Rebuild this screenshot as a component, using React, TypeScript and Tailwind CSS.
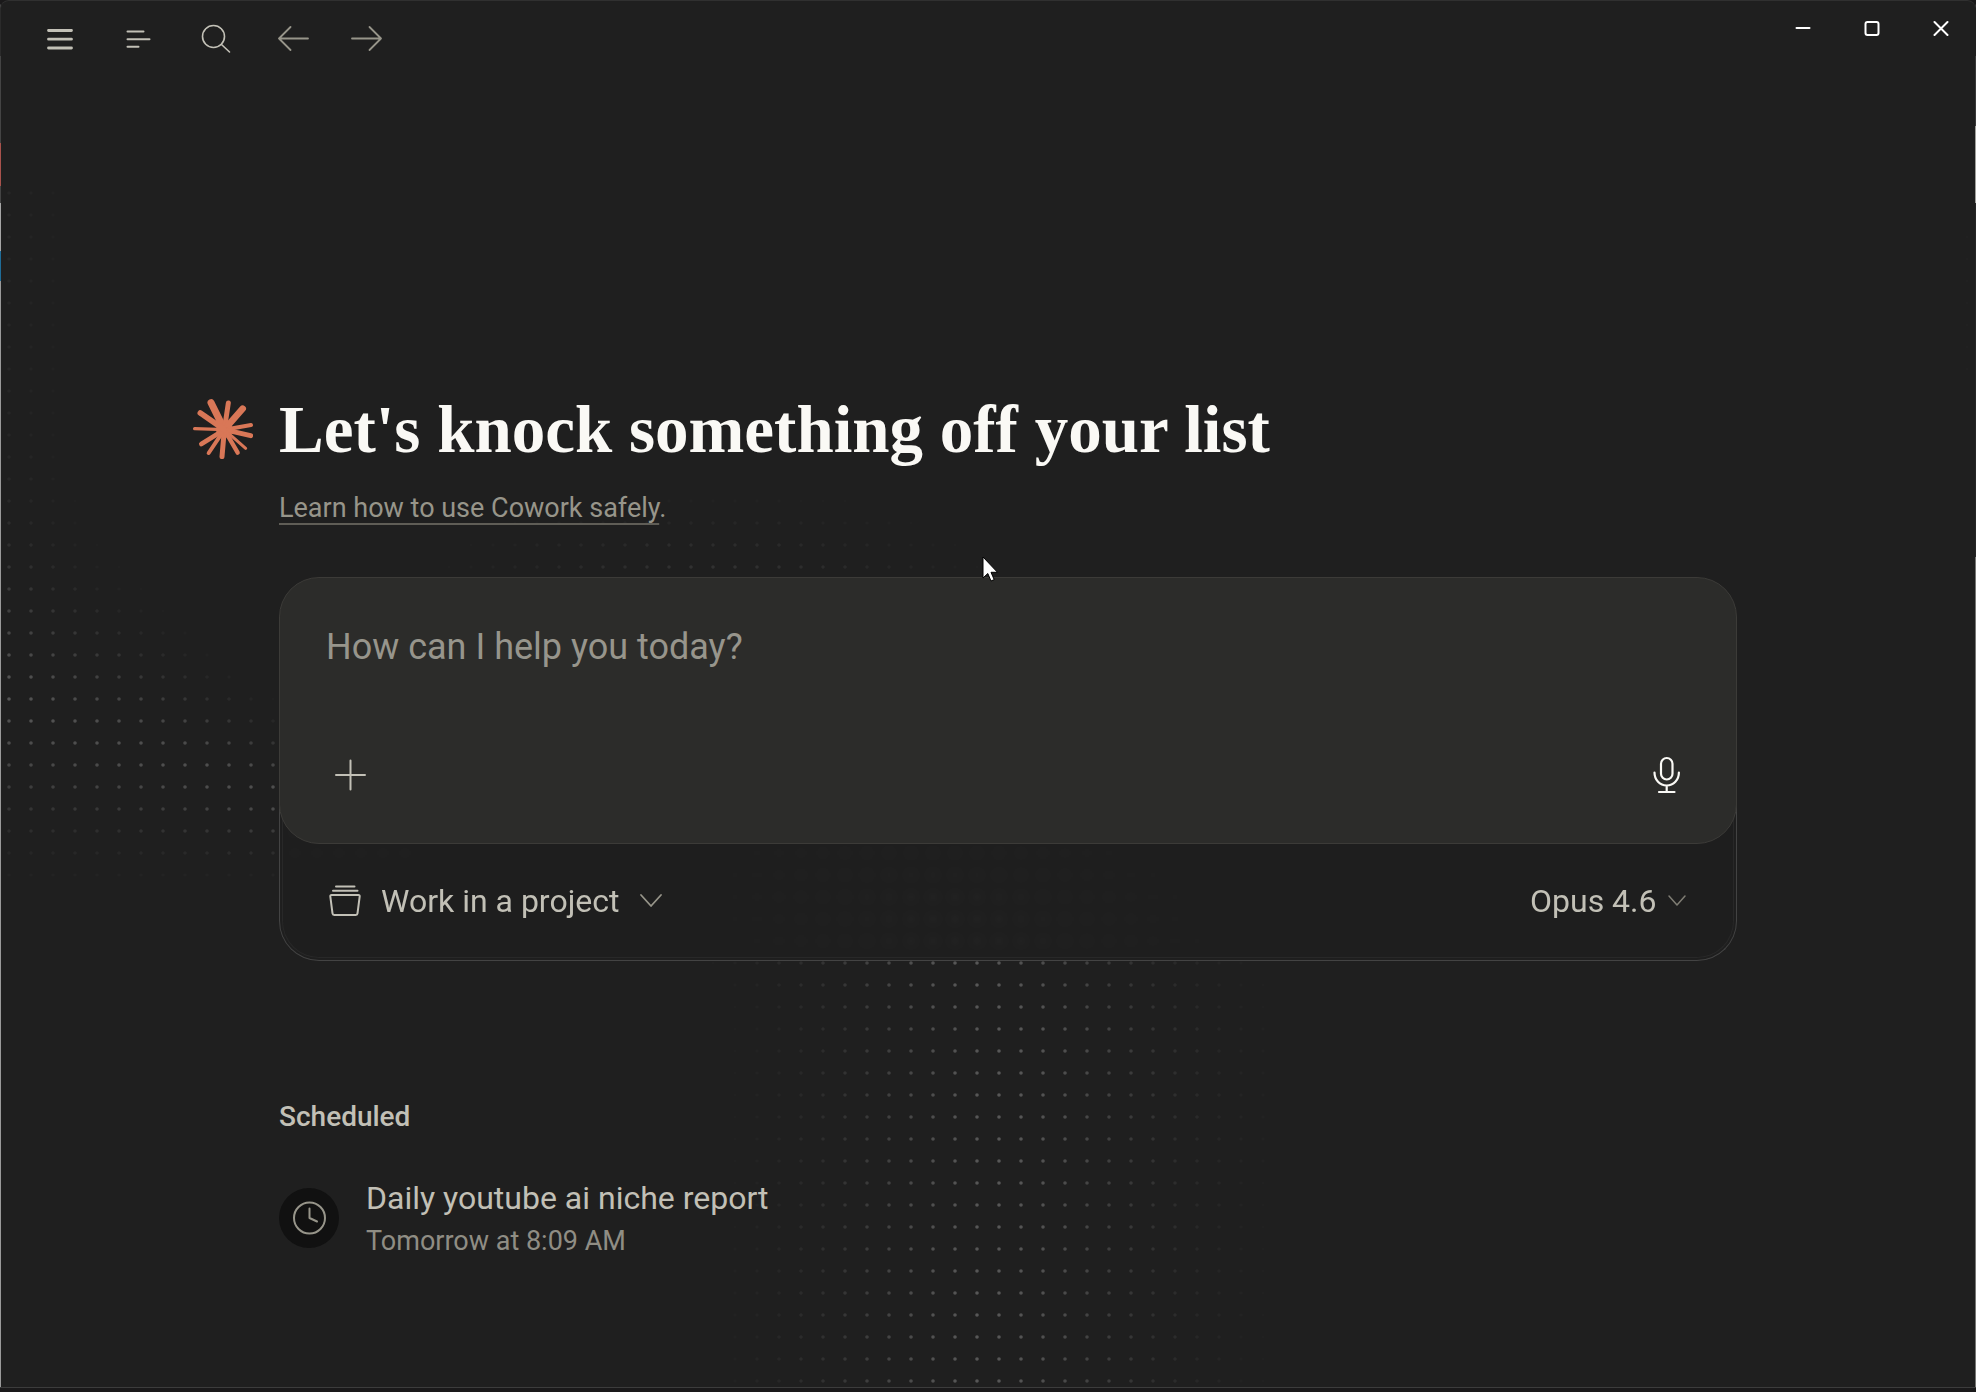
import { useMemo, type ReactNode } from 'react';

const GRID = 22;

const bell = (d: number, sigma: number) => Math.exp(-(d * d) / (2 * sigma * sigma));

// Brightness of the dot field at a point, 0 to 1
function glow(x: number, y: number) {
  const ridge = 714 + Math.min(x, 280) * 0.28;
  const up = Math.max(98 - x * 0.22, 34);
  const down = Math.max(72 - x * 0.12, 38);
  const left = x < 420 ? bell(y - ridge, y < ridge ? up : down) * 0.85 : 0;
  const leftTail = y > 180 && y < ridge ? 0.12 * bell(x, 45) : 0;

  const top = 0.38 * bell(x - 710, 135) * bell(y - 590, 48);

  const bend = y < 1030 ? 1000 - (1030 - y) * 0.42 : 1000 - (y - 1030) * 0.06;
  const column = y > 800 ? bell(x - bend, x < bend ? 105 : 112) * Math.min((y - 800) / 100, 1) : 0;

  const corner = 0.05 * bell(x - 1976, 40) * bell(y - 300, 120);
  return Math.min(left + leftTail + top + column + corner, 1);
}

function DotField() {
  const dots = useMemo(() => {
    const list: { x: number; y: number; o: number }[] = [];
    for (let x = 8; x < 2560; x += GRID) {
      for (let y = 16; y < 1600; y += GRID) {
        const o = glow(x, y);
        if (o > 0.04) list.push({ x, y, o });
      }
    }
    return list;
  }, []);

  return (
    <svg aria-hidden="true" className="pointer-events-none absolute inset-0 h-full w-full">
      {dots.map((dot) => (
        <circle key={`${dot.x}-${dot.y}`} cx={dot.x} cy={dot.y} r="1.8" fill="#ffffff" fillOpacity={dot.o * 0.25} />
      ))}
    </svg>
  );
}

type IconProps = { children: ReactNode; size?: string; stroke?: string; box?: number };

function Icon({ children, size = 'size-8', stroke = '2', box = 32 }: IconProps) {
  return (
    <svg
      aria-hidden="true"
      viewBox={`0 0 ${box} ${box}`}
      className={`${size} shrink-0`}
      fill="none"
      stroke="currentColor"
      strokeWidth={stroke}
      strokeLinecap="round"
      strokeLinejoin="round"
    >
      {children}
    </svg>
  );
}

// x, y of each ray's tip and the width of the ray
const rays = [
  [54, 11, 21],
  [106, 12, 15],
  [149, 29, 20],
  [174, 78, 12],
  [173, 110, 15],
  [158, 148, 9],
  [134, 161, 13],
  [87, 173, 15],
  [47, 162, 12],
  [25, 135, 14],
  [5, 89, 10],
  [22, 42, 17],
];

function Starburst() {
  return (
    <svg aria-hidden="true" viewBox="0 0 180 180" className="size-[60px] shrink-0 text-[#d97757]">
      <circle cx="94" cy="92" r="25" fill="currentColor" />
      {rays.map(([x, y, w]) => (
        <line key={`${x}-${y}`} x1="94" y1="92" x2={x} y2={y} stroke="currentColor" strokeWidth={w} strokeLinecap="round" />
      ))}
    </svg>
  );
}

function TitleBar() {
  return (
    <header className="relative flex h-[75px] items-center justify-between pl-[43px] pr-[14px]">
      <nav aria-label="Main" className="flex items-center gap-[46px] text-[#c2c0b6]">
        <button type="button" aria-label="Menu">
          <Icon stroke="2.8">
            <path d="M4.5 7.5h23M4.5 16.2h23M4.5 25h23" />
          </Icon>
        </button>
        <button type="button" aria-label="Toggle sidebar">
          <Icon stroke="2">
            <path d="M5.500 8.500h16M5.500 16.200h22M5.500 23.800h11" />
          </Icon>
        </button>
        <button type="button" aria-label="Search">
          <Icon stroke="1.6">
            <circle cx="13.5" cy="13.5" r="11" />
            <path d="M21.5 21.5l8 7.5" />
          </Icon>
        </button>
        <div className="flex items-center gap-[41px] text-[#97958a]">
          <button type="button" aria-label="Back">
            <Icon stroke="1.8">
              <path d="M30 15.5H1M12.500 4L1 15.5L12.500 27" />
            </Icon>
          </button>
          <button type="button" aria-label="Forward">
            <Icon stroke="1.8">
              <path d="M1 15.5h29M18.5 4L30 15.5L18.5 27" />
            </Icon>
          </button>
        </div>
      </nav>

      <div className="flex items-center gap-[29px] self-start pt-[7px] text-white">
        <button type="button" aria-label="Minimize" className="flex size-10 items-center justify-center">
          <Icon size="size-4" box={16}>
            <path d="M1.5 8h13" />
          </Icon>
        </button>
        <button type="button" aria-label="Maximize" className="flex size-10 items-center justify-center">
          <Icon size="size-4" box={16}>
            <rect x="1.5" y="2" width="13" height="13" rx="2" />
          </Icon>
        </button>
        <button type="button" aria-label="Close" className="flex size-10 items-center justify-center">
          <Icon size="size-4" box={16}>
            <path d="M1.5 2l13 13M14.5 2l-13 13" />
          </Icon>
        </button>
      </div>
    </header>
  );
}

function Composer() {
  return (
    <form className="mt-[51px]" onSubmit={(e) => e.preventDefault()}>
      <div className="relative z-10 rounded-[40px] border border-[#3c3b38] bg-[#2c2c2a] px-[46px] pt-[45px] pb-11">
        <textarea
          aria-label="Message"
          placeholder="How can I help you today?"
          className="block h-32 w-full resize-none bg-transparent text-[36px] leading-[48px] text-[#faf9f5] outline-none placeholder:text-[#97958c]"
        />
        <div className="flex items-center justify-between">
          <button type="button" aria-label="Add files" className="flex size-12 items-center justify-center text-[#c2c0b6]">
            <Icon stroke="2">
              <path d="M2 16h29M16.500 1.500v29" />
            </Icon>
          </button>
          <button type="button" aria-label="Dictate" className="flex size-12 items-center justify-center text-[#faf9f5]">
            <Icon size="size-10" box={40} stroke="2.2">
              <rect x="15" y="3" width="11.5" height="21.5" rx="5.7" />
              <path d="M8.500 17.500c0 7.500 5.300 13 12.200 13s12.200-5.500 12.200-13M20.700 30.500v6.500M13 37h15.500" />
            </Icon>
          </button>
        </div>
      </div>

      <div className="-mt-12 rounded-b-[40px] border border-t-0 border-[#434343] p-[2px] pt-0 backdrop-blur-[4px]">
        <div className="rounded-b-[37px] border border-t-0 border-[#282828] bg-[#1f1f1f]/40 px-[46px] pt-[49px] text-[#c2c0b6]">
          <div className="flex h-[112px] items-center justify-between">
            <label className="flex items-center gap-5">
              <Icon>
                <path d="M7 1.500h18.500M4 5.800h24.500" />
                <path d="M2.500 10h27c.8 0 1.300.6 1.200 1.400l-2.200 17c-.1.900-.8 1.600-1.700 1.600H5.200c-.9 0-1.600-.7-1.700-1.600l-2.200-17c-.1-.8.400-1.400 1.200-1.400z" />
              </Icon>
              <span className="relative flex items-center">
                <select aria-label="Project" className="appearance-none bg-transparent pr-[43px] text-[32px] leading-10 outline-none">
                  <option>Work in a project</option>
                </select>
                <span className="pointer-events-none absolute right-0 text-[#97958a]">
                  <Icon size="size-6" box={24} stroke="1.8">
                    <path d="M2 6l10 11L22 6" />
                  </Icon>
                </span>
              </span>
            </label>
            <span className="relative flex items-center">
              <select aria-label="Model" className="appearance-none bg-transparent pr-[30px] text-[32px] leading-10 outline-none">
                <option>Opus 4.6</option>
              </select>
              <span className="pointer-events-none absolute right-0 text-[#7f7d74]">
                <Icon size="size-5" box={20} stroke="1.5">
                  <path d="M2 5l8 9l8-9" />
                </Icon>
              </span>
            </span>
          </div>
        </div>
      </div>
    </form>
  );
}

function Scheduled() {
  return (
    <section className="mt-[138px]">
      <h2 className="text-[28px] leading-9 font-medium text-[#c2c0b6]">Scheduled</h2>
      <ul className="mt-10">
        <li className="flex items-center gap-[27px]">
          <span className="flex size-[60px] items-center justify-center rounded-full bg-[#111111] text-[#97958a]">
            <Icon size="size-9" box={36}>
              <circle cx="18.500" cy="18" r="15.500" />
              <path d="M18.500 8.500v9.500l7.500 3.500" />
            </Icon>
          </span>
          <div>
            <p className="text-[32px] leading-[46px] text-[#c2c0b6]">Daily youtube ai niche report</p>
            <p className="text-[27px] leading-10 text-[#8f8d84]">Tomorrow at 8:09 AM</p>
          </div>
        </li>
      </ul>
    </section>
  );
}

function Pointer() {
  return (
    <svg aria-hidden="true" viewBox="0 0 17 26" className="pointer-events-none absolute top-[556px] left-[982px] z-20 h-[26px] w-[17px]">
      <path d="M1 1v21l4.800-4.500 3.200 7.500 3.200-1.400-3.200-7.300h6.500z" fill="#ffffff" stroke="#000000" strokeWidth="1" />
    </svg>
  );
}

export default function App() {
  return (
    <div className="flex min-h-screen flex-col bg-[#1a191a] font-[Roboto,'Liberation_Sans',sans-serif]">
      <div className="relative flex flex-1 overflow-hidden rounded-t-lg border-b border-[#3c3c3c] bg-[#1f1f1f]">
        {/* Slivers of the windows behind */}
        <div aria-hidden="true" className="flex w-px flex-col bg-[#9a9a9a]">
          <div className="h-14 bg-[#2b2b2b]" />
          <div className="h-[87px] bg-[#444444]" />
          <div className="h-[43px] bg-[#a8524c]" />
          <div className="h-[17px] bg-[#444444]" />
          <div className="h-12 bg-[#a6a6a6]" />
          <div className="h-[30px] bg-[#1f6c98]" />
        </div>

        <div className="relative min-w-0 flex-1 rounded-t-lg border-t border-[#303030]">
          <DotField />
          <TitleBar />
          <main className="relative pr-10 pb-16 pl-20 pt-[313px]">
            <div className="mx-auto max-w-[1458px]">
              <div className="-ml-[86px] flex items-center gap-[26px]">
                <Starburst />
                <h1 className="font-['Liberation_Serif',serif] text-[67px] leading-[80px] font-bold text-[#faf9f5]">
                  Let's knock something off your list
                </h1>
              </div>
              <p className="mt-[21px] text-[27px] leading-9 text-[#97958a]">
                <a href="#safety" className="underline decoration-[#5f5d56] decoration-2 underline-offset-[6px] [text-decoration-skip-ink:none]">
                  Learn how to use Cowork safely
                </a>
                .
              </p>
              <Composer />
              <Scheduled />
            </div>
          </main>
        </div>

        <div aria-hidden="true" className="flex w-px flex-col bg-[#777775]">
          <div className="h-14 bg-[#1f1f1f]" />
          <div className="h-[70px] bg-[#3a3a3a]" />
          <div className="h-[77px] bg-[#a0a09c]" />
          <div className="h-[354px] bg-[#262626]" />
        </div>

        <Pointer />
      </div>
      <div className="h-1" />
    </div>
  );
}
